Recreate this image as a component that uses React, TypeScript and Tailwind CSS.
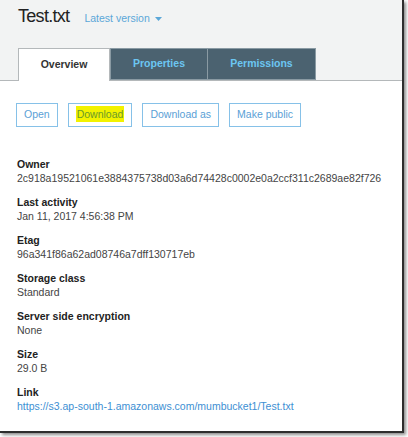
const fields = [
  { label: "Owner", value: "2c918a19521061e3884375738d03a6d74428c0002e0a2ccf311c2689ae82f726" },
  { label: "Last activity", value: "Jan 11, 2017 4:56:38 PM" },
  { label: "Etag", value: "96a341f86a62ad08746a7dff130717eb" },
  { label: "Storage class", value: "Standard" },
  { label: "Server side encryption", value: "None" },
  { label: "Size", value: "29.0 B" },
  { label: "Link", value: "https://s3.ap-south-1.amazonaws.com/mumbucket1/Test.txt", link: true },
];

export default function App() {
  return (
    <div className="w-[408px] h-[437px] bg-white font-['Liberation_Sans',Arial,sans-serif]">
      <div className="w-[404px] h-[433px] border-r-2 border-b-2 border-[#2e2e2e] shadow-[2px_2px_3px_rgba(0,0,0,0.45)] bg-white overflow-hidden">
        {/* Header */}
        <div className="bg-[#f2f3f3] border-b border-[#b4b8ba] h-[81px]">
          <div className="flex items-baseline pt-[6px] pl-[18px] h-[27px]">
            <span className="text-[18px] leading-[21px] text-[#222] tracking-[-0.7px]">Test.txt</span>
            <span className="ml-[15px] text-[10.5px] text-[#5ba7d8] flex items-center gap-[5px]">
              Latest version
              <svg width="7" height="4" viewBox="0 0 7 4"><path d="M0 0h7L3.5 4z" fill="#5ba7d8" /></svg>
            </span>
          </div>
          <div className="flex pl-[18px] mt-[21px] h-[33px]">
            <div className="w-[92px] h-[33px] bg-white border border-b-0 border-[#b4b8ba] flex items-center justify-center text-[10.5px] font-bold text-[#333]">
              Overview
            </div>
            <div className="w-[98px] h-[32px] bg-[#4b6270] border border-[#8a9aa3] flex items-center justify-center text-[10.5px] font-bold text-[#6cc6f2]">
              Properties
            </div>
            <div className="w-[108px] h-[32px] bg-[#4b6270] border border-l-0 border-[#8a9aa3] flex items-center justify-center text-[10.5px] font-bold text-[#6cc6f2]">
              Permissions
            </div>
          </div>
        </div>

        {/* Actions */}
        <div className="flex gap-[10px] pl-[16px] mt-[22px]">
          <button className="h-[24px] px-[7px] border border-[#86c1e8] text-[10.5px] text-[#5b9fd6]">Open</button>
          <button className="h-[24px] px-[7px] border border-[#86c1e8] text-[10.5px] text-[#6a9a2a]">
            <span className="bg-[#f2f200] px-[1px] py-[2px]">Download</span>
          </button>
          <button className="h-[24px] px-[7px] border border-[#86c1e8] text-[10.5px] text-[#5b9fd6]">Download as</button>
          <button className="h-[24px] px-[7px] border border-[#86c1e8] text-[10.5px] text-[#5b9fd6]">Make public</button>
        </div>

        {/* Details */}
        <div className="flex flex-col gap-[10px] pl-[17px] mt-[30px]">
          {fields.map((f) => (
            <div key={f.label} className="text-[10.5px] leading-[14px]">
              <div className="font-bold text-[#222]">{f.label}</div>
              <div className={f.link ? "text-[#3d8fd3]" : "text-[#444]"}>{f.value}</div>
            </div>
          ))}
        </div>
      </div>
    </div>
  );
}
